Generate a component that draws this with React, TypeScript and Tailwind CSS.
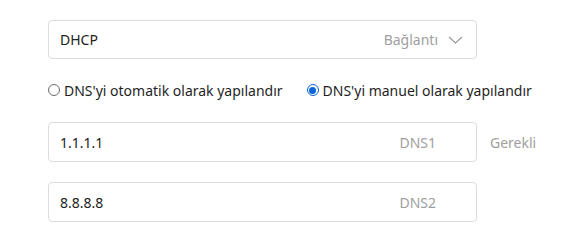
import { useState } from "react";

const font = { fontFamily: '"Noto Sans", "Open Sans", sans-serif' };

const Chevron = () => (
  <svg width="15" height="8" viewBox="0 0 15 8" fill="none" className="ml-[10px] mr-[13px]">
    <path d="M1 1l6.5 6 6.5-6" stroke="#9a9a9a" strokeWidth="1.2" />
  </svg>
);

const Radio = ({ checked, label, onClick }: { checked: boolean; label: string; onClick: () => void }) => (
  <label className="flex items-center gap-[4px] cursor-pointer" onClick={onClick}>
    {checked ? (
      <span className="w-[12px] h-[12px] rounded-full border border-[#0a66d8] bg-white flex items-center justify-center">
        <span className="w-[7px] h-[7px] rounded-full bg-[#0a66d8]" />
      </span>
    ) : (
      <span className="w-[12px] h-[12px] rounded-full border border-[#6b6b6b] bg-white" />
    )}
    <span className="text-[14px] text-[#1f1f1f]">{label}</span>
  </label>
);

const Field = ({ value, label }: { value: string; label: string }) => (
  <div className="w-[429px] h-[40px] border border-[#dcdcdc] rounded-[4px] flex items-center pl-[11px] pr-[40px] bg-white">
    <span className="flex-1 text-[14px] text-[#222]">{value}</span>
    <span className="text-[14px] text-[#a0a0a0]">{label}</span>
  </div>
);

export default function App() {
  const [manual, setManual] = useState(true);
  return (
    <div className="w-[578px] h-[245px] bg-white pt-[20px] pl-[48px]" style={font}>
      <div className="w-[429px] h-[39px] border border-[#dcdcdc] rounded-[4px] flex items-center pl-[11px]">
        <span className="flex-1 text-[14px] text-[#222]">DHCP</span>
        <span className="text-[14px] text-[#a0a0a0]">Bağlantı</span>
        <Chevron />
      </div>
      <div className="mt-[21px] h-[20px] flex items-center gap-[24px]">
        <Radio checked={!manual} label="DNS'yi otomatik olarak yapılandır" onClick={() => setManual(false)} />
        <Radio checked={manual} label="DNS'yi manuel olarak yapılandır" onClick={() => setManual(true)} />
      </div>
      <div className="mt-[22px] flex items-center gap-[13px]">
        <Field value="1.1.1.1" label="DNS1" />
        <span className="text-[14px] text-[#a0a0a0]">Gerekli</span>
      </div>
      <div className="mt-[20px]">
        <Field value="8.8.8.8" label="DNS2" />
      </div>
    </div>
  );
}
